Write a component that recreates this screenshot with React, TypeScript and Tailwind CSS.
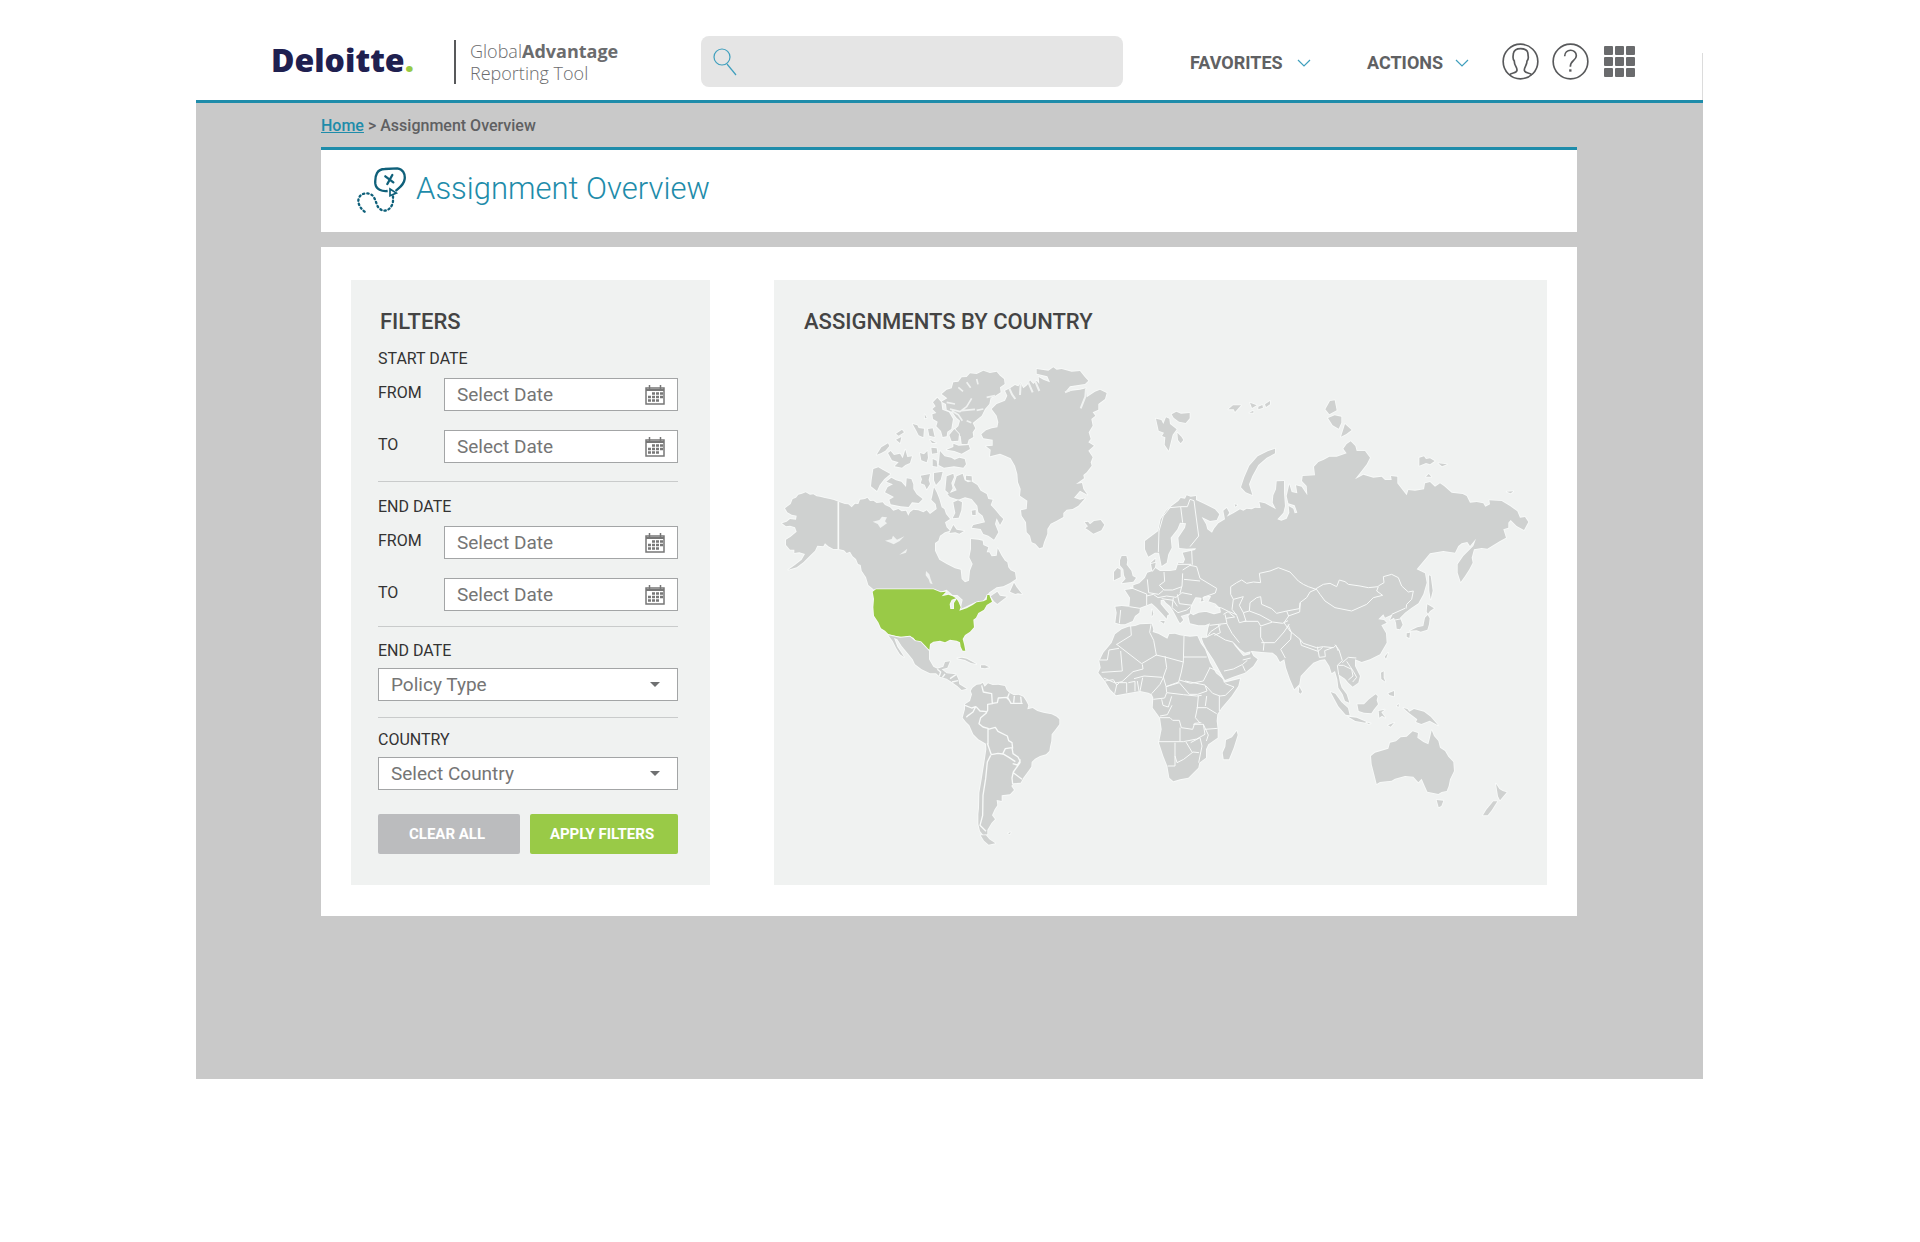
const ROBOTO = "font-['Roboto','Liberation_Sans',sans-serif]";
const OPEN_SANS = "font-['Open_Sans','Noto_Sans',sans-serif]";

function Logo() {
  return (
    <a href="#home" aria-label="Deloitte home" className={`${OPEN_SANS} flex pb-1 text-[32px] leading-[38px] font-extrabold text-[#1f2050]`}>
      Deloitte<span className="text-[#97ca45]">.</span>
    </a>
  );
}

function Chevron() {
  return (
    <svg width="14" height="8" viewBox="0 0 14 8" fill="none" stroke="#3f9fbd" strokeWidth="1.2">
      <path d="M1 1l6 6 6-6" />
    </svg>
  );
}

function UserIcon() {
  return (
    <svg width="37" height="37" viewBox="0 0 111 111" fill="none" stroke="#58595b" strokeWidth="5">
      <circle cx="55.5" cy="55.5" r="52" />
      <path d="M22 96C28 88 44 92 45 82C46 72 36 68 37 54C30 46 34 40 34 32C36 20 46 17 56 17C68 17 78 22 78 34C78 42 82 46 75 54C75 68 66 72 67 82C68 92 84 88 90 96" />
    </svg>
  );
}

function HelpIcon() {
  return (
    <svg width="37" height="37" viewBox="0 0 111 111" fill="none" stroke="#58595b" strokeWidth="5">
      <circle cx="55.5" cy="55.5" r="52" />
      <path d="M38 40C38 16 73 16 73 38C73 53 55 52 55 71" />
      <path d="M55 79v7" strokeWidth="7" />
    </svg>
  );
}

function GridIcon() {
  return (
    <svg width="31" height="31" viewBox="0 0 31 31" fill="#6a6b6d">
      {[0, 11, 22].map((y) => [0, 11, 22].map((x) => <rect key={`${x}-${y}`} x={x} y={y} width="9" height="9" rx="1" />))}
    </svg>
  );
}

function RouteIcon() {
  return (
    <svg width="50" height="48" viewBox="18 16 150 144" fill="none" stroke="#0f607a" strokeWidth="7">
      <path d="M113 88C96 90 78 84 76 66C74 40 82 22 104 22L142 20C158 22 166 36 164 52C162 70 148 78 137 88" />
      <path d="M106 44l24 18M127 40l-15 27" strokeLinecap="round" />
      <path d="M120 82l19 12-19 8z" strokeWidth="5" />
      <path
        d="M44 150C30 140 21 122 27 108C34 92 58 92 68 102C80 116 78 134 90 142C104 152 118 146 126 130C130 122 129 114 129 104"
        strokeDasharray="4 9"
        strokeLinecap="round"
      />
    </svg>
  );
}

function CalendarIcon() {
  return (
    <svg width="20" height="20" viewBox="0 0 20 20" fill="none" stroke="#777">
      <path d="M1 3h18v16H1z" strokeWidth="1.5" />
      <path d="M1 5h18" strokeWidth="2" />
      <path d="M4.500 0v4M15.500 0v4" strokeWidth="1.500" />
      <path d="M7 8.500h11M3 12h15M3 15.500h11" strokeWidth="2.500" strokeDasharray="3 1" />
    </svg>
  );
}

function DateField({ id, label }: { id: string; label: string }) {
  return (
    <div className="flex items-center">
      <label htmlFor={id} className="w-[66px] shrink-0 pb-1 text-base leading-5 text-[#333]">
        {label}
      </label>
      <div className="flex h-[33px] min-w-0 flex-1 items-center border border-[#a3a5a6] bg-white px-3">
        <input
          id={id}
          type="text"
          placeholder="Select Date"
          className="min-w-0 flex-1 bg-transparent text-[19px] leading-6 text-[#757575] outline-none placeholder:text-[#757575]"
        />
        <button type="button" aria-label="Open calendar" className="shrink-0">
          <CalendarIcon />
        </button>
      </div>
    </div>
  );
}

function SelectField({ id, label, placeholder }: { id: string; label: string; placeholder: string }) {
  return (
    <div className="flex flex-col gap-[7px]">
      <label htmlFor={id} className="text-base leading-5 text-[#333]">
        {label}
      </label>
      <div className="relative">
        <select
          id={id}
          className="block h-[33px] w-full appearance-none border border-[#a3a5a6] bg-white px-3 text-[19px] leading-6 text-[#757575]"
        >
          <option>{placeholder}</option>
        </select>
        <svg className="pointer-events-none absolute top-3.5 right-[18px]" width="10" height="5" viewBox="0 0 10 5" fill="#6f7071">
          <path d="M0 0h10L5 5z" />
        </svg>
      </div>
    </div>
  );
}

function Filters() {
  return (
    <form className="w-[359px] shrink-0 bg-[#f0f2f1] pt-[30px] pr-8 pb-[30px] pl-[27px]">
      <h2 className="pl-0.5 text-[22px] leading-6 font-medium text-[#444]">FILTERS</h2>

      <fieldset className="mt-[15px] min-w-0">
        <legend className="text-base leading-5 text-[#333]">START DATE</legend>
        <div className="mt-[9px] flex flex-col gap-[19px]">
          <DateField id="start-from" label="FROM" />
          <DateField id="start-to" label="TO" />
        </div>
      </fieldset>
      <hr className="mt-[18px] border-[#c9cbcb]" />

      <fieldset className="mt-[15px] min-w-0">
        <legend className="text-base leading-5 text-[#333]">END DATE</legend>
        <div className="mt-[9px] flex flex-col gap-[19px]">
          <DateField id="end-from" label="FROM" />
          <DateField id="end-to" label="TO" />
        </div>
      </fieldset>
      <hr className="mt-[15px] mb-3.5 border-[#c9cbcb]" />

      <SelectField id="policy" label="END DATE" placeholder="Policy Type" />
      <hr className="mt-4 mb-3 border-[#c9cbcb]" />
      <SelectField id="country" label="COUNTRY" placeholder="Select Country" />

      <div className="mt-6 flex gap-2.5 text-[15px] font-bold text-white">
        <button type="reset" className="h-10 w-[142px] rounded-xs bg-[#bbbcbe] pr-1">
          CLEAR ALL
        </button>
        <button type="button" className="h-10 flex-1 rounded-xs bg-[#99ca47] pr-1">
          APPLY FILTERS
        </button>
      </div>
    </form>
  );
}

function WorldMap() {
  return (
    <svg
      role="img"
      aria-label="World map with the United States highlighted"
      className="h-auto w-full [paint-order:stroke]"
      viewBox="0 0 2319 1653"
      fill="#cfd1d0"
      stroke="#f8faf9"
      strokeWidth="5"
      strokeLinejoin="round"
    >
      {/* North America, Greenland, Iceland */}
      <g transform="translate(-12 45)">
        <path d="M205 458L192 453 180 450 165 447 150 443 140 442 130 436 120 437 107 430 96 434 85 437 78 446 68 450 62 465 45 478 52 490 65 497 80 500 78 512 60 510 50 518 36 523 48 532 60 530 75 535 80 548 62 563 48 572 48 588 60 602 73 602 73 612 88 610 105 615 95 632 75 648 55 662 80 655 100 640 118 622 135 605 142 590 160 592 165 583 175 592 190 600 205 600 222 604 230 612 240 608 248 622 258 630 264 645 272 648 275 665 288 685 295 708 312 722 318 720 490 720 512 728 530 722 548 738 562 738 578 752 575 765 572 780 590 772 615 760 640 755 650 740 658 730 680 715 700 712 720 702 738 690 735 670 722 664 715 655 712 640 705 635 695 620 683 598 680 620 665 622 658 610 650 610 655 595 640 588 638 575 625 572 603 570 603 600 598 625 608 645 600 665 597 695 585 700 575 690 572 662 555 658 530 645 508 632 500 616 495 605 495 582 505 575 510 560 525 550 540 545 530 535 525 520 540 510 528 495 523 480 515 475 508 450 500 430 492 415 487 440 484 452 497 465 500 480 480 495 470 484 460 490 445 484 430 482 420 490 415 500 408 485 395 487 385 480 370 485 360 475 345 468 338 460 320 462 310 455 300 456 292 446 285 450 270 452 265 465 255 464 245 475 235 466 225 465Z" />
        <path d="M205 458V600" />
        <g fill="#f0f2f1" stroke="none">
          <path d="M468 666l10 10 4 14 6 16-8-3-4-12-9-12zM308 518l20-5 8-10 15 2-6 12 6 6-20 14-8-12zM345 575l20-5 4-10 12 12 22-10-14 14-18 10-10-5zM388 617l24-18-4 12z" />
        </g>
        <path
          fill="#99ca47"
          d="M318 721H490L512 730 528 728 515 742 535 737 548 742 558 748 545 752 539 765 541 780 552 780 552 762 560 750 566 760 572 775 568 785 590 778 608 768 620 760 640 757 650 752 652 738 658 738 666 758 650 768 642 782 625 792 618 806 610 812 612 835 600 848 585 858 578 870 582 885 586 905 578 905 572 893 570 880 560 875 540 872 525 880 510 875 490 878 480 885 478 902 465 895 455 880 440 878 430 866 415 862 400 865 380 862 355 855 345 845 333 838 325 820 312 800 310 775 312 750 308 728Z"
        />
        <path d="M720 728l12-27 8 14 16 20-12-2-8 2zM662 742l20-14 8 12 20 3-28 22-10-8z" />
        <path d="M705 125L720 118 735 108 745 112 752 103 760 118 772 108 780 94 790 105 800 95 808 105 806 84 820 92 840 100 832 82 800 74 800 60 835 65 850 55 860 62 875 60 905 68 930 66 945 85 955 95 945 105 925 108 900 112 885 130 905 125 930 122 948 118 950 145 975 128 990 122 1010 132 1005 150 985 165 985 182 968 190 976 200 964 210 968 230 956 250 962 270 955 280 972 290 955 305 968 325 962 340 965 350 950 370 940 378 942 388 918 405 936 402 940 420 952 437 930 425 912 446 930 452 945 448 925 470 908 480 890 482 880 492 880 504 860 515 842 524 832 540 832 555 822 580 818 595 808 598 796 584 785 580 780 560 770 550 768 520 755 500 753 484 770 480 772 455 750 440 752 420 744 400 742 375 735 350 722 328 705 320 690 314 660 322 662 302 648 292 668 290 668 272 640 268 634 256 648 244 665 238 682 235 685 220 680 200 665 180 680 165 705 155 712 140Z" />
        <g fill="none" stroke="#f0f2f1" strokeWidth="6">
          <path d="M718 118l8 18 10 14M752 104l-2 34M774 98l14 32M796 98l12 28M948 118l-2 25-14 35M885 130l20-8" />
        </g>
        <path d="M515 135L530 122 545 118 550 100 565 98 575 85 590 84 600 73 620 75 640 65 660 72 680 68 690 80 702 90 704 105 690 115 692 130 676 140 662 146 658 165 645 180 635 200 620 212 608 222 616 238 608 250 610 264 596 272 592 286 575 285 572 262 550 245 565 232 570 215 558 205 548 190 530 182 528 165 514 158 532 148Z" />
        <g fill="none" stroke="#f0f2f1" strokeWidth="5">
          <path d="M540 180l30 8 20-15 15-25M575 185l40-4M555 165l-25-5M650 145l25-5M545 185l20 12 12 18M590 100l12 16M620 90l4 16M565 115l14 12M640 180l-20 4M590 215l14 6" />
        </g>
        <path d="M502 146l12 14 3 22 20 8 12 20-5 30-12 8-2 14-12 2-5-18-14-14 4-14-14-8-2-14 12-4-12-12 10-8-8-12z" />
        <path d="M510 306l14 16 20 4 10 6 14-6 16 4 4 16-8 10-28-4-30 4-16-8zM530 302l20-8 0-10 16 6 30-2 4 12-25 14-22-8zM538 258l15-18 14 15-2 20-20 2z" />
        <path d="M530 382l20-8 2 10-8 18 4 16-10 16-12-10zM560 382L578 374 584 394 594 400 608 396 588 392 588 380 605 382 606 398 622 408 632 425 650 435 655 450 668 452 662 468 678 485 690 500 700 510 690 528 680 508 675 525 685 550 672 572 655 560 640 555 632 540 605 536 610 528 645 520 638 500 625 490 622 470 605 450 585 445 565 452 540 444 532 435 560 424 552 408Z" />
        <path d="M345 430l8-16 16-8-20-8 15-12 14 8 16 4 14 16 2-26 14 2 6 16 0 14 10 16 18 14-12 12-20-2-10 14-24-2-30-6-4-14 14-8zM310 360l15-5 14 8 22 12-18 15-14 18-8 18-18-14 2-20zM452 380l28-5-4 18 4 12-10 16-6-14-12-4 4-12zM492 372l26-4-6 24-14 16-6-14z" />
        <path d="M320 317l14-22 20-12 4 8-12 14-14 8zM354 312l8-6 10 12 18-4 8 14 8-26 6 22 14-2-6 20-14 6-10 8-22-4 12-12-20-6zM378 254l18-12 6 8-16 10zM378 272l16-8-4 18zM428 225l14 4 4 8 16 2-2 26-14-6-8-16zM474 240l14-2 6 26-16-4zM450 312l12 4 10-10 2 20-4 14-16-6zM484 296l16 2 2 14-16 2zM488 330l12 5 2 18-14-2zM480 272l18 10-12 0zM464 196l6 10-5 2z" />
        <path d="M538 552l12-24 10 14 22 4-14 8-12-4zM550 460l14-6 12 6-2 24-8 22-18 2 8-16-4-20zM605 485l12-2 0 15-10 0zM944 520l10-2 6 8 12-10 20-3 11 14-9 17-24 10-16-12-8-4 8-6z" />
      </g>

      {/* Central and South America */}
      <g transform="translate(228 676)">
        <path d="M115 228L150 235 180 232 195 245 212 248 225 262 237 275 237 300 250 322 262 328 280 322 285 308 300 306 292 325 275 330 290 342 318 345 325 360 328 375 345 385 350 388 335 392 322 380 305 368 290 358 270 352 258 342 240 342 215 330 195 315 188 300 172 280 155 260 142 240 132 236 142 262 155 282 162 293 150 285 138 265 128 245Z" />
        <path d="M322 297l14-2 14 3 14 8 15 8-16-3-18-9zM393 318l12 0 12 6-12 3-12-2z" />
        <path d="M368 385L380 376 392 375 398 370 404 382 414 372 428 377 445 376 465 380 470 392 478 400 492 408 506 406 520 412 528 424 535 438 532 450 548 446 562 455 580 460 605 465 620 472 628 480 628 495 618 508 605 525 604 545 600 562 598 575 588 585 570 590 555 598 545 608 544 622 535 635 520 655 512 670 490 672 484 680 492 692 480 705 455 708 455 725 440 722 442 738 434 750 426 768 435 780 425 790 412 812 412 825 400 828 390 815 385 795 385 765 387 745 388 700 395 660 403 610 409 570 408 553 385 540 370 525 358 498 348 488 338 475 342 460 345 450 345 435 360 425 366 405 362 395Z" />
        <path d="M392 828l16 0 10 12 18 12-20 4-14-12zM474 822l8-3-2 5z" />
        <path
          fill="none"
          strokeWidth="4"
          d="M395 378l5 20 25 5 2 30-14 2 0 18-6 10M427 432l15-2 3-14 24-2 8 8M478 402l-5 12 10 18 35 0M493 410l-2 20M512 412l2 18M345 438l20 8 12-4-8 16-14 10-6 6M378 442l12 13 20 2M410 460l-18 15-5 18 12 10 15 4 0 48M414 510l22-6 8 12 28 14 4 14 10 6 2 18M412 552l12 34 20-4 14 2 8-16 20-3 3 18 15 10 6 12-8 12-14-4M458 583l20 12 18 12M510 600l0 10-20 28-4 18 2 18M490 640l26 20M422 588l-10 20-5 50-8 50-1 60-8 30 18 18M262 330l10 8-4 12M285 344l-8 10M318 346l-18 12M306 368l18-4"
        />
      </g>

      {/* Europe and Asia */}
      <g transform="translate(948 46)">
        <path d="M165 575L185 560 205 545 212 510 220 498 228 485 245 470 265 455 272 446 285 448 290 438 302 442 318 440 318 452 345 465 375 480 388 495 380 512 360 515 335 503 348 525 352 540 366 550 372 538 385 522 405 510 400 484 410 476 418 490 410 502 430 492 450 480 460 484 470 478 485 480 495 475 512 476 508 458 525 462 540 470 558 480 548 460 550 438 558 420 560 396 582 395 582 430 585 470 580 490 562 510 574 514 590 508 598 490 596 470 610 478 614 492 622 490 614 468 595 462 590 440 598 405 605 428 622 432 618 408 635 412 652 438 650 410 636 395 638 380 675 378 672 352 685 338 700 332 718 322 740 322 770 312 760 298 770 284 782 276 796 290 800 305 825 305 840 325 830 345 812 368 795 390 820 376 850 385 875 382 885 392 905 392 903 380 922 382 922 402 940 425 950 438 955 422 975 424 1002 420 1005 402 1020 398 1035 412 1050 402 1062 410 1085 430 1118 434 1130 440 1140 460 1160 458 1180 462 1186 472 1200 465 1198 453 1235 455 1260 470 1282 486 1290 505 1305 503 1315 518 1302 542 1280 530 1262 512 1255 520 1255 535 1240 540 1248 565 1230 575 1192 598 1175 596 1152 600 1145 625 1148 640 1138 660 1125 680 1112 698 1103 670 1103 645 1120 620 1150 590 1158 568 1140 590 1132 578 1115 582 1105 590 1095 610 1060 605 1020 612 1000 636 980 660 1005 672 1010 700 1000 735 985 762 965 775 945 790 930 805 938 826 930 840 920 838 918 820 912 805 900 812 908 795 885 805 880 795 865 810 882 812 890 820 874 828 888 852 890 880 870 915 840 930 815 938 795 930 795 950 810 980 805 1000 788 1012 775 1000 765 988 745 975 750 1000 755 1015 770 1035 778 1060 765 1055 758 1035 745 1015 742 990 735 965 725 972 718 950 705 930 690 932 670 940 655 955 632 980 628 1005 613 1020 600 990 588 955 583 930 570 938 560 920 548 910 515 908 485 905 465 910 450 900 432 880 425 875 435 890 450 908 460 920 480 915 482 905 490 920 503 930 490 950 465 970 430 982 405 992 395 975 370 930 350 900 340 880 335 865 350 865 355 835 360 822 345 828 325 828 300 822 295 800 304 790 285 796 272 800 280 812 270 822 264 812 258 800 250 785 240 770 228 760 222 752 212 752 212 764 225 780 238 795 232 798 230 808 218 795 200 775 185 762 170 768 150 775 148 790 135 800 128 815 105 825 92 825 76 820 80 790 76 772 95 770 118 772 120 745 105 722 130 718 130 708 148 702 165 685 172 670 188 665 183 640 196 628 195 655 210 665 240 665 258 662 265 640 280 642 285 630 278 610 315 602 318 597 290 598 268 596 265 565 285 535 288 522 270 520 262 540 242 565 245 595 235 615 230 640 215 650 207 610 195 610 175 622 165 600Z" />
        <path
          fill="#f0f2f1"
          d="M302 790L306 768 318 746 332 748 328 760 344 757 340 745 360 742 352 757 375 765 388 778 390 788 372 792 348 785 325 788 310 795Z"
        />
        <path
          fill="none"
          strokeWidth="3"
          d="M205 608L207 545 220 500 240 475 272 472 278 520M272 472l20 0 8-22 12 4 6 46 8 60-26 32M222 668l2 28-16 12 14 14 26 0 28-10 2-40M172 690l4 40 30 5 14-12M282 690l48 5M278 662l22-14 20 4 10 35 50 30-4 14-34 12M305 602l2 44M262 645l42 0M170 740l20-5 14 10 26-5 28 4 18-14 30 6M262 735l6 28 40 5M215 748l35 5 12 18M250 745l-4 30 18 15 26-8 12-10M275 712l-5 20M120 714l50 20 0 34M92 782l-4 40M118 772l32 5M422 712L440 700 455 692 470 702 490 698 512 700 508 672 540 665 565 655 600 668 625 695 640 705 655 712 678 720 660 728 650 745 630 760 628 778 590 785 560 792 545 778 515 765 512 742 500 745 480 760 478 785 460 790 448 768 460 742 430 750 422 735ZM460 790l8 25-20 5-8-22-14-18 4-30M375 772l20 4 20 10 25 10M400 795l14-8 20 16-26 4M405 795l6 27-52 6M410 822l16 30 22 28M462 816l42 0 8 14 36-12 30 4 16-8M512 832l0 32 10 18-2 22M478 785l32 12 36 20M590 785l6 15-14 20M514 880l40 0 28-32 16-24M595 800l34-12 2-28M594 826l10 24-2 20-30 30 14 26M582 820L600 845 630 870 640 882 680 895 700 892 730 895 738 888 745 905M630 870l4 18 50 18 14-12M678 718L700 705 720 702 740 712 748 692 765 697 775 705 810 710 835 715 865 712 860 725 878 738 850 745 830 765 785 785 735 775 705 755 690 735ZM865 710L882 700 880 682 905 675 925 685 935 710 955 728 970 725 965 750 950 765 948 778M905 795l40-18M915 812l20-4M350 865l12-18 30-20M352 862l20-10 34 20 22 6M385 825l6 25-18 8M402 965l28-6 28-14 14-12M458 948l8 18M458 932l24-6"
        />
        <path d="M95 620l14 0 3 12-2 14 14 18 4 16 10 5-8 12-25 3-10 2 12-14-5-10-2-18-10-12 0-15zM72 668l10-12 10 5 0 22-20 10zM210 815l14 0-2 8zM185 802l1-22 4 14zM183 644l14-4-2 14-8 10z" />
        <path d="M198 208l16 4 6 12 8-20 10 4 2 16 20 16-12 16-4 16-8 32-12-18 2-22-10-4 6-10-16-6zM245 195l14-8 14 6 26-2 0 16-12 14-20-4-16-12zM262 250l12 12 6 10-8 10-8-10zM555 298l0 14-25 13-25 22-18 33-10 25 10 32-20-8-14-15 10-30 15-35 25-28 30-15z" />
        <path d="M415 180l14-12 24 0-18 20-4-8zM480 160l20 8-14 8zM505 172l12-5 2 8-14 5zM525 165l15-10 0 10-12 8zM478 190l12-6 0 6zM706 180l14-25 14-2 6 30-22 12zM714 206l20-8 20 4 0 18-8 18-18-10zM753 262l12-38 20 18-16 12zM988 325l14-4 6 8 12-2 14 8-14 10-12-4-20 8zM1045 342l26 3-15 6zM1008 382l8-8 8 8zM1250 427l20-1-8 6zM434 465l8 2-6 5z" />
      </g>

      {/* Africa */}
      <g transform="translate(918 796)">
        <path d="M125 90L145 82 165 80 180 75 215 73 220 90 218 98 235 103 262 118 268 104 285 103 300 108 330 112 352 110 362 132 375 150 390 190 408 222 428 238 432 250 480 238 475 260 455 290 425 325 412 345 410 365 413 390 413 415 385 435 378 450 378 475 358 490 355 505 325 535 300 540 280 546 268 535 262 500 250 470 237 430 245 390 240 355 218 325 220 295 215 285 205 280 180 275 150 280 108 288 90 270 75 245 55 220 62 205 58 185 70 160 95 130 105 105Z" />
        <path
          fill="none"
          strokeWidth="3"
          d="M152 80l2 28-45 28M60 182l22 0 5-30 30-5M110 135l75 58 44-26-8-44-12-24 4-24M122 155l5 60-62 4M187 195l2 14-30 8-33 30-20 4-35-15M228 167l27 6 55 15 2-78M312 173l68 0M310 188l-6 30-8 30-38 14M255 170l5 35-10 28 8 28 2 18M162 238l30-8 55 4M188 235l-8 40M250 235l-10 20-25 28M220 300l34-4 6-16 50 6 40 4 15-2M258 262l40-12 30 35 25 0 28-10-6-18-60-12M298 242l34 10 38-7 20-40M388 205l30 12 12 24M378 260l20 22 22 8 16-2 26-25-26-10M418 290l0 45M245 300l4 18 16 5 10-32M240 350l22-4 14-28M240 355l30 0 8 8 20 0 6 22 34 5 6-18 20-2M355 290l-3 35-6 30 14 16M350 325l30 0 30 18M380 290l-4 30M375 390l38-3M340 375l30 0 5 30-25 14-40 8-75 0M300 385l0 40M370 375l15 32-6 18M285 430l0 70-22 0M285 470l6 20 20-10 28-22 18 2M318 428l18 30M332 430l28-15 6 25-10 50M110 258l8-8 22 0 0 30M145 250l20-4 0 30M172 245l5 30M75 245l25-4 10 16-6 26"
        />
        <path d="M470 395l3 12-12 38-14 35-16 0-3-20 8-18 2-20 18-8zM658 262l8 15-4 6-6-4z" />
      </g>

      {/* South-east Asia and Oceania */}
      <g transform="translate(1518 676)">
        <path
          fill="none"
          strokeWidth="3"
          d="M165 256l12 16 10 32-15 14 4 28M187 310l18-16 24 2M175 318l15 0 25 12 4 20-14 12M200 306l20 30 10 18-12 14M112 262l6 32 18-2-2-18 26-10"
        />
        <path d="M152 398l14 5 18 25 20 18 5 22-12-2-22-25zM205 472l25 3 28 12-2 3-30-5zM232 435l20 0 15-15 20-15 6 6-3 12 4 12-12 15-8 12-22-2-16-5zM296 455l18-4-10 8 12 16-10-6-8 6zM370 446l12 3 6 8 14-8 30 8 20 15 22 26-25-14-25 10-16-6 4-8-24-18zM303 340l8-4 0 19 5 12-12-8zM325 402l17-7 0 16-14-4zM314 292l10-12-6 18zM262 490l10 2-8 2zM324 498l18-8-10 12zM350 440l6-6 0 8z" />
        <path d="M380 222l10-2-2 16-8-4zM390 214l22-10 18-4 5-25 8-8 6 10-2 18-5 16-20 6-12-4zM440 157l2-22 20 12-12 8-6 8zM447 48l5 2 6 44-6 26-4-25z" />
        <path d="M273 590L285 580 305 574 325 568 330 550 348 546 362 534 380 532 398 516 414 521 412 535 430 548 445 555 450 535 455 513 462 530 475 545 480 565 495 575 505 592 520 608 522 635 510 660 506 680 500 695 485 698 475 704 442 697 432 675 425 658 415 669 400 652 375 650 345 658 335 664 300 668 290 674 284 650 275 615ZM470 722l20 2-6 16-8 4zM648 673l10 16 10 6 12 4-10 12-10 12-6-12zM640 726l12 0-17 27-12 15-14 0 10-17z" />
      </g>
    </svg>
  );
}

export default function App() {
  return (
    <div className={`${ROBOTO} min-h-screen bg-white pr-[217px] pl-[196px]`}>
      <header className="relative flex items-center border-b-3 border-[#1e8caa] pt-9 pr-[68px] pb-[13px] pl-[75px]">
        <span aria-hidden="true" className="absolute top-[53px] right-0 bottom-0 w-px bg-[#dcdcdc]" />
        <div className="flex w-[430px] shrink-0 items-center">
          <div className="w-[183px]">
            <Logo />
          </div>
          <p className={`${OPEN_SANS} border-l-2 border-[#58595b] pl-3.5 text-lg leading-[22px] font-light text-[#6b6c6e]`}>
            Global<b className="font-bold">Advantage</b>
            <br />
            Reporting Tool
          </p>
        </div>

        <div className="flex h-[51px] min-w-0 flex-1 items-center rounded-lg bg-[#e5e5e5] pl-3">
          <svg width="24" height="28" viewBox="0 0 24 28" fill="none" stroke="#3f9fbd" strokeWidth="1.2">
            <circle cx="9" cy="9" r="8" />
            <path d="M14 16l9 11" />
          </svg>
          <input type="search" aria-label="Search" className="min-w-0 flex-1 bg-transparent px-3 text-lg outline-none" />
        </div>

        <nav className="ml-[67px] flex items-center text-lg font-bold text-[#606163]">
          <button type="button" className="flex w-[177px] items-center gap-3.5 pt-0.5 font-bold">
            FAVORITES <Chevron />
          </button>
          <button type="button" className="flex w-[135px] items-center gap-3 pt-0.5 font-bold">
            ACTIONS <Chevron />
          </button>
          <button type="button" aria-label="Profile">
            <UserIcon />
          </button>
          <button type="button" aria-label="Help" className="ml-[13px]">
            <HelpIcon />
          </button>
          <button type="button" aria-label="Applications" className="ml-[15px]">
            <GridIcon />
          </button>
        </nav>
      </header>

      <main className="bg-[#c9c9c9] pr-[126px] pb-[163px] pl-[125px]">
        <nav aria-label="Breadcrumb" className="flex h-11 items-center gap-1 pt-0.5 text-base font-medium text-[#5f6062]">
          <a href="#home" className="text-[#1e8caa] underline">
            Home
          </a>
          <span>&gt;</span>
          <span>Assignment Overview</span>
        </nav>

        <div className="flex h-[85px] items-center gap-2.5 border-t-3 border-[#1e8caa] bg-white pl-[35px]">
          <RouteIcon />
          <h1 className="pb-1 font-['Roboto_Slab','Roboto',sans-serif] text-[31px] leading-10 font-light text-[#1e8caa]">
            Assignment Overview
          </h1>
        </div>

        <div className="mt-[15px] flex gap-16 bg-white px-[30px] pt-[33px] pb-[31px]">
          <Filters />
          <section className="min-w-0 flex-1 bg-[#f0f2f1] pt-[30px]">
            <h2 className="pl-[30px] text-[22px] leading-6 font-medium text-[#444]">ASSIGNMENTS BY COUNTRY</h2>
            <WorldMap />
          </section>
        </div>
      </main>
    </div>
  );
}
